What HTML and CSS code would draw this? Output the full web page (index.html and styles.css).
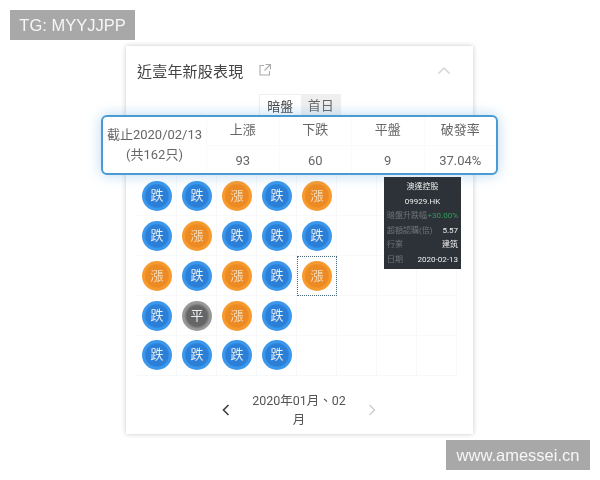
FILE: index.html
```html
<!DOCTYPE html>
<html lang="zh-Hant">
<head>
    <meta charset="UTF-8">
    <meta name="viewport" content="width=device-width, initial-scale=1.0">
    <title>近壹年新股表現</title>
    <link rel="stylesheet" href="styles.css">
</head>
<body>
    <div class="mark mark-top">TG: MYYJJPP</div>

    <div class="card">
        <div class="card-head">
            <h1>近壹年新股表現</h1>
            <svg class="open-icon" width="14" height="14" viewBox="0 0 14 14">
                <path d="M6 2.500H2v9.500h9.500V8M7.500 1.500h5v5M12.500 1.500L6.500 7.500" fill="none" stroke="#aaa" stroke-width="1.100"/>
            </svg>
            <svg class="fold-icon" width="14" height="9" viewBox="0 0 14 9">
                <path d="M1.500 7.500L7 2l5.500 5.500" fill="none" stroke="#d4d4d4" stroke-width="1.500"/>
            </svg>
        </div>

        <div class="tabs">
            <span class="tab active">暗盤</span>
            <span class="tab">首日</span>
        </div>

        <div class="board">
            <div class="row">
                <div class="cell"><span class="coin down">跌</span></div>
                <div class="cell"><span class="coin down">跌</span></div>
                <div class="cell"><span class="coin up">漲</span></div>
                <div class="cell"><span class="coin down">跌</span></div>
                <div class="cell"><span class="coin up">漲</span></div>
            </div>
            <div class="row">
                <div class="cell"><span class="coin down">跌</span></div>
                <div class="cell"><span class="coin up">漲</span></div>
                <div class="cell"><span class="coin down">跌</span></div>
                <div class="cell"><span class="coin down">跌</span></div>
                <div class="cell"><span class="coin down">跌</span></div>
            </div>
            <div class="row">
                <div class="cell"><span class="coin up">漲</span></div>
                <div class="cell"><span class="coin down">跌</span></div>
                <div class="cell"><span class="coin up">漲</span></div>
                <div class="cell"><span class="coin down">跌</span></div>
                <div class="cell selected"><span class="coin up">漲</span></div>
            </div>
            <div class="row">
                <div class="cell"><span class="coin down">跌</span></div>
                <div class="cell"><span class="coin flat">平</span></div>
                <div class="cell"><span class="coin up">漲</span></div>
                <div class="cell"><span class="coin down">跌</span></div>
            </div>
            <div class="row">
                <div class="cell"><span class="coin down">跌</span></div>
                <div class="cell"><span class="coin down">跌</span></div>
                <div class="cell"><span class="coin down">跌</span></div>
                <div class="cell"><span class="coin down">跌</span></div>
            </div>
        </div>

        <div class="pager">
            <svg width="10" height="14" viewBox="0 0 10 14">
                <path d="M7.500 2L2.500 7l5 5" fill="none" stroke="#444" stroke-width="1.700"/>
            </svg>
            <div class="pager-text">2020年01月、02月</div>
            <svg width="10" height="14" viewBox="0 0 10 14">
                <path d="M2.500 2l5 5-5 5" fill="none" stroke="#ccc" stroke-width="1.400"/>
            </svg>
        </div>
    </div>

    <div class="summary">
        <div class="summary-label">截止2020/02/13<br>(共162只)</div>
        <div class="stat"><div class="stat-name">上漲</div><div class="stat-value">93</div></div>
        <div class="stat"><div class="stat-name">下跌</div><div class="stat-value">60</div></div>
        <div class="stat"><div class="stat-name">平盤</div><div class="stat-value">9</div></div>
        <div class="stat"><div class="stat-name">破發率</div><div class="stat-value">37.04%</div></div>
    </div>

    <div class="tooltip">
        <div class="tip-title">澳達控股</div>
        <div class="tip-title">09929.HK</div>
        <div class="tip-row"><span>暗盤升跌幅</span><span class="gain">+30.00%</span></div>
        <div class="tip-row"><span>超額認購(倍)</span><b>5.57</b></div>
        <div class="tip-row"><span>行業</span><b>建筑</b></div>
        <div class="tip-row"><span>日期</span><b>2020-02-13</b></div>
    </div>

    <div class="mark mark-bottom">www.amessei.cn</div>
</body>
</html>
```

FILE: styles.css
```css
body {
    position: relative;
    width: 600px;
    height: 480px;
    margin: 0;
    overflow: hidden;
    background-color: #fff;
    color: #666;
    font-family: "Roboto", "Noto Sans CJK TC", sans-serif;
}
/* the source is a soft jpeg, everything sits slightly out of focus */
body > * {
    filter: blur(0.35px);
}
.mark {
    position: absolute;
    height: 30px;
    line-height: 30px;
    background-color: #a8a8a8;
    color: #f6f6f6;
    font-family: "Liberation Sans", sans-serif;
    font-size: 16.500px;
    text-align: center;
}
.mark-top {
    left: 10px;
    top: 10px;
    width: 125px;
}
.mark-bottom {
    left: 446px;
    top: 440px;
    width: 144px;
}
.card {
    box-sizing: border-box;
    width: 347px;
    height: 388px;
    margin: 46px 0 0 126px;
    padding: 0 11px;
    background-color: #fff;
    box-shadow: 0 0 5px rgba(0, 0, 0, 0.22);
}
.card-head {
    display: flex;
    align-items: center;
    height: 48px;
}
.card-head h1 {
    margin: 0;
    color: #444;
    font-size: 15px;
    font-weight: 400;
    letter-spacing: 0.2px;
}
.open-icon {
    margin-left: 15px;
}
.fold-icon {
    margin-left: auto;
    margin-right: 11px;
}
.tabs {
    display: flex;
    width: 82px;
    height: 23px;
    margin-left: 122px;
    background-color: #efefef;
    font-size: 13px;
    line-height: 24px;
}
.tab {
    flex: 1;
    text-align: center;
}
.tab.active {
    margin: 1px 0 0 1px;
    background-color: #fff;
    color: #444;
}
.board {
    box-sizing: border-box;
    width: 320px;
    height: 200px;
    margin-top: 59px;
    border-bottom: 1px solid #f6f8fa;
    background-image:
        repeating-linear-gradient(90deg, transparent 0 39px, #f6f8fa 39px 40px),
        repeating-linear-gradient(0deg, transparent 0 39px, #f8f9fb 39px 40px);
}
.row {
    display: flex;
    height: 40px;
}
.row:nth-child(4) {
    height: 39px;
}
.cell {
    display: flex;
    align-items: center;
    justify-content: center;
    box-sizing: border-box;
    width: 40px;
    height: 40px;
}
.cell.selected {
    border: 1px dotted #4a6a80;
}
.coin {
    display: block;
    box-sizing: border-box;
    width: 30px;
    height: 30px;
    border-radius: 50%;
    color: #e8eef4;
    font-size: 13px;
    line-height: 30px;
    text-align: center;
}
.down {
    background: radial-gradient(circle, #2b7fd6 0 11px, #3a97ec 12.500px);
}
.up {
    background: radial-gradient(circle, #ec8a24 0 11px, #f79a2e 12.500px);
    color: #f8dcb8;
}
.flat {
    background: radial-gradient(circle, #666 0 10px, #999 13px);
}
.pager {
    display: flex;
    align-items: center;
    justify-content: center;
    gap: 18px;
    width: 320px;
    height: 48px;
    margin: 10px 0 0 2px;
}
.pager-text {
    width: 100px;
    color: #555;
    font-size: 12.500px;
    line-height: 19px;
    text-align: center;
}
.summary {
    position: absolute;
    left: 101px;
    top: 115px;
    display: flex;
    box-sizing: border-box;
    width: 397px;
    height: 60px;
    border: 2px solid #4a9bd4;
    border-radius: 6px;
    background-color: #fff;
    box-shadow: 0 0 14px rgba(80, 160, 225, 0.4);
}
.summary-label {
    width: 103px;
    padding-top: 8px;
    box-sizing: border-box;
    font-size: 13px;
    line-height: 20px;
    text-align: center;
}
.stat {
    flex: 1;
    border-left: 1px solid #fafafa;
    text-align: center;
}
.stat-name {
    height: 28px;
    border-bottom: 1px solid #fafafa;
    font-size: 13px;
    line-height: 26px;
}
.stat-value {
    font-size: 13px;
    line-height: 30px;
}
.tooltip {
    position: absolute;
    left: 384px;
    top: 177px;
    box-sizing: border-box;
    width: 77px;
    height: 92px;
    padding: 3px 3px 0;
    background-color: #2d3238;
    color: #eee;
    font-size: 8px;
    line-height: 14.500px;
}
.tip-title {
    text-align: center;
}
.tip-row {
    display: flex;
    justify-content: space-between;
    white-space: nowrap;
    color: #6f7478;
}
.tip-row b {
    color: #eee;
    font-weight: 400;
}
.gain {
    color: #2f9e5c;
}
```
